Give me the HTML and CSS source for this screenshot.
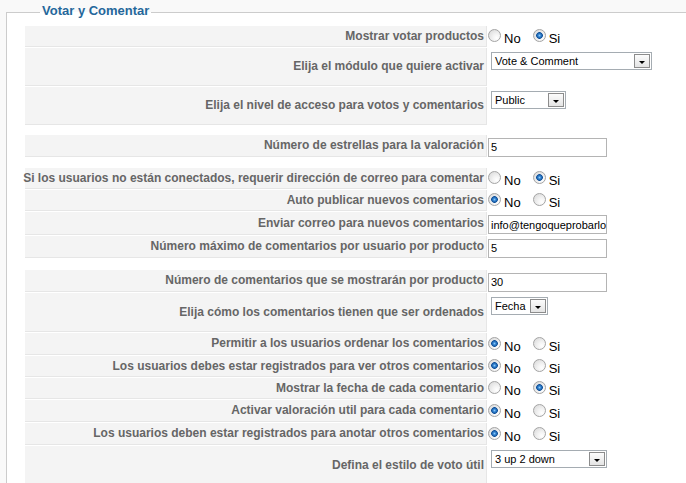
FILE: index.html
```html
<!DOCTYPE html>
<html lang="es">
<head>
<meta charset="utf-8">
<title>Votar y Comentar</title>
<link rel="stylesheet" href="styles.css">
</head>
<body>
<fieldset class="panel">
  <legend class="panel-title">Votar y Comentar</legend>
  <div class="params">
    <div class="row h21">
      <div class="key">Mostrar votar productos</div>
      <div class="val val-radio"><span class="opt"><span class="radio"></span>No</span><span class="opt"><span class="radio on"></span>Si</span></div>
    </div>
    <div class="row h38">
      <div class="key">Elija el módulo que quiere activar</div>
      <div class="val val-select"><span class="select w-vote"><span class="select-text">Vote &amp; Comment</span><span class="select-btn"><span class="caret"></span></span></span></div>
    </div>
    <div class="row h38">
      <div class="key">Elija el nivel de acceso para votos y comentarios</div>
      <div class="val val-select"><span class="select w-public"><span class="select-text">Public</span><span class="select-btn"><span class="caret"></span></span></span></div>
    </div>
    <div class="spacer s8"></div>
    <div class="row h22">
      <div class="key">Número de estrellas para la valoración</div>
      <div class="val val-input"><input class="field" type="text" value="5"></div>
    </div>
    <div class="spacer s9"></div>
    <div class="row h21">
      <div class="key">Si los usuarios no están conectados, requerir dirección de correo para comentar</div>
      <div class="val val-radio"><span class="opt"><span class="radio"></span>No</span><span class="opt"><span class="radio on"></span>Si</span></div>
    </div>
    <div class="row h21">
      <div class="key">Auto publicar nuevos comentarios</div>
      <div class="val val-radio"><span class="opt"><span class="radio on"></span>No</span><span class="opt"><span class="radio"></span>Si</span></div>
    </div>
    <div class="row h23">
      <div class="key">Enviar correo para nuevos comentarios</div>
      <div class="val val-input"><input class="field" type="text" value="info@tengoqueprobarlo"></div>
    </div>
    <div class="row h22">
      <div class="key">Número máximo de comentarios por usuario por producto</div>
      <div class="val val-input"><input class="field" type="text" value="5"></div>
    </div>
    <div class="spacer s10"></div>
    <div class="row h22">
      <div class="key">Número de comentarios que se mostrarán por producto</div>
      <div class="val val-input"><input class="field" type="text" value="30"></div>
    </div>
    <div class="row h39">
      <div class="key">Elija cómo los comentarios tienen que ser ordenados</div>
      <div class="val val-select"><span class="select w-fecha"><span class="select-text">Fecha</span><span class="select-btn"><span class="caret"></span></span></span></div>
    </div>
    <div class="row h22">
      <div class="key">Permitir a los usuarios ordenar los comentarios</div>
      <div class="val val-radio"><span class="opt"><span class="radio on"></span>No</span><span class="opt"><span class="radio"></span>Si</span></div>
    </div>
    <div class="row h21">
      <div class="key">Los usuarios debes estar registrados para ver otros comentarios</div>
      <div class="val val-radio"><span class="opt"><span class="radio on"></span>No</span><span class="opt"><span class="radio"></span>Si</span></div>
    </div>
    <div class="row h21">
      <div class="key">Mostrar la fecha de cada comentario</div>
      <div class="val val-radio"><span class="opt"><span class="radio"></span>No</span><span class="opt"><span class="radio on"></span>Si</span></div>
    </div>
    <div class="row h22">
      <div class="key">Activar valoración util para cada comentario</div>
      <div class="val val-radio"><span class="opt"><span class="radio on"></span>No</span><span class="opt"><span class="radio"></span>Si</span></div>
    </div>
    <div class="row h22">
      <div class="key">Los usuarios deben estar registrados para anotar otros comentarios</div>
      <div class="val val-radio"><span class="opt"><span class="radio on"></span>No</span><span class="opt"><span class="radio"></span>Si</span></div>
    </div>
    <div class="row h39">
      <div class="key">Defina el estilo de voto útil</div>
      <div class="val val-select"><span class="select w-style"><span class="select-text">3 up 2 down</span><span class="select-btn"><span class="caret"></span></span></span></div>
    </div>
    <div class="spacer s10"></div>
  </div>
</fieldset>
</body>
</html>
```

FILE: styles.css
```css
html, body {
  margin: 0;
  padding: 0;
}

body {
  background: #f9f9f9;
  font-family: "Liberation Sans", Arial, Helvetica, sans-serif;
  width: 686px;
  height: 483px;
  overflow: hidden;
}

.panel {
  box-sizing: border-box;
  width: 900px;
  min-height: 560px;
  margin: 3px 0 0 6px;
  padding: 5px 0 0 18px;
  border: 1px solid #cccccc;
  background: #ffffff;
}

.panel-title {
  margin-left: 15px;
  padding: 0 2px 2px;
  font-size: 13px;
  line-height: 16px;
  font-weight: bold;
  color: #25679b;
}

.params {
  display: flex;
  flex-direction: column;
  gap: 1px;
}

.row {
  display: grid;
  grid-template-columns: 462px 1fr;
  column-gap: 1px;
}

.h21 { height: 21px; }
.h22 { height: 22px; }
.h23 { height: 23px; }
.h38 { height: 38px; }
.h39 { height: 39px; }

.s8 { height: 8px; }
.s9 { height: 9px; }
.s10 { height: 10px; }

.key {
  box-sizing: border-box;
  display: flex;
  align-items: center;
  justify-content: flex-end;
  padding: 0 2px 1px 0;
  background: #f4f4f4;
  border-right: 1px solid #e6e6e6;
  border-bottom: 1px solid #e6e6e6;
  font-size: 12px;
  line-height: 14px;
  font-weight: bold;
  color: #666666;
  white-space: nowrap;
}

.val {
  display: flex;
  box-sizing: border-box;
}

.val-radio {
  align-items: center;
  padding-top: 2px;
}

.val-input {
  align-items: center;
  padding-top: 2px;
}

.val-select {
  align-items: flex-start;
  padding: 4px 0 0 3px;
}

/* radio buttons */
.opt {
  display: flex;
  align-items: flex-end;
  font-size: 13px;
  line-height: 15px;
  color: #000000;
}

.opt + .opt {
  margin-left: 12px;
}

.radio {
  box-sizing: border-box;
  width: 13px;
  height: 13px;
  margin: 0 3px 4px 0;
  border: 1px solid #a4a4a4;
  border-radius: 50%;
  background: radial-gradient(circle at 70% 72%, #ffffff 0, #f3f3f3 35%, #d6d6d6 100%);
}

.radio.on {
  background:
    radial-gradient(circle at 50% 50%, #8fcaf6 0, #3a8ad6 1.3px, #0f4f98 3px, rgba(15, 79, 152, 0) 3.7px),
    radial-gradient(circle at 70% 72%, #ffffff 0, #f3f3f3 35%, #d6d6d6 100%);
}

/* select boxes */
.select {
  box-sizing: border-box;
  display: flex;
  align-items: center;
  height: 18px;
  border: 1px solid #a5acb2;
  background: #ffffff;
  font-size: 11px;
  color: #000000;
}

.select-text {
  flex: 1;
  padding-left: 3px;
  white-space: nowrap;
  overflow: hidden;
}

.select-btn {
  box-sizing: border-box;
  display: flex;
  align-items: center;
  justify-content: center;
  width: 16px;
  height: 14px;
  margin-right: 1px;
  border: 1px solid #8c8c8c;
  background: linear-gradient(#fcfcfc, #e4e4e4);
}

.caret {
  width: 0;
  height: 0;
  margin-top: 2px;
  border-left: 3px solid transparent;
  border-right: 3px solid transparent;
  border-top: 3px solid #000000;
}

.w-vote { width: 161px; }
.w-public { width: 75px; }
.w-fecha { width: 57px; }
.w-style { width: 116px; }

/* text inputs */
.field {
  box-sizing: border-box;
  width: 119px;
  height: 19px;
  margin: 0;
  padding: 0 0 0 2px;
  border: 1px solid #b4b4b4;
  background: #ffffff;
  font-family: "Liberation Sans", Arial, Helvetica, sans-serif;
  font-size: 11px;
  color: #000000;
  outline: none;
}
```
